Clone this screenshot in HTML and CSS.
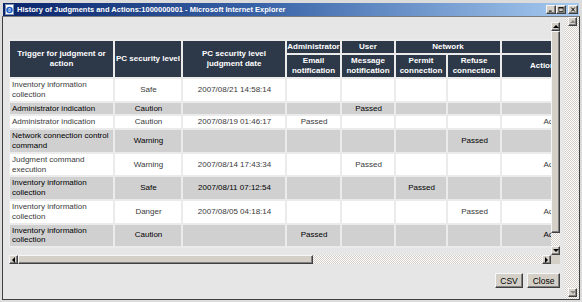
FILE: index.html
```html
<!DOCTYPE html>
<html lang="en">
<head>
    <meta charset="UTF-8">
    <title>History of Judgments and Actions</title>
    <link rel="stylesheet" href="styles.css">
</head>
<body>
<div class="window">
    <div class="titlebar">
        <svg class="app-icon" viewBox="0 0 11 11">
            <rect x="1.5" y="0.5" width="8" height="10" fill="#fff" stroke="#8090b0"/>
            <circle cx="5.5" cy="6" r="2.5" fill="none" stroke="#1a5cc8" stroke-width="1.5"/>
            <path d="M3 6h5" stroke="#1a5cc8" stroke-width="1.2"/>
        </svg>
        <span class="title">History of Judgments and Actions:1000000001 - Microsoft Internet Explorer</span>
        <div class="caption-buttons">
            <span class="cap-btn raised">
                <svg viewBox="0 0 8 7"><rect x="1" y="5" width="4" height="1.5" fill="#000"/></svg>
            </span>
            <span class="cap-btn raised">
                <svg viewBox="0 0 8 7"><rect x="1" y="0.5" width="6" height="6" fill="none" stroke="#000"/><rect x="1" y="0.5" width="6" height="1.5" fill="#000"/></svg>
            </span>
            <span class="cap-btn raised close">
                <svg viewBox="0 0 8 7"><path d="M1.5 0.8L6.5 6.2M6.5 0.8L1.5 6.2" stroke="#000" stroke-width="1.4"/></svg>
            </span>
        </div>
    </div>

    <div class="client">
        <div class="doc">
            <div class="scrollbox">
                <div class="viewport">
                    <table class="history">
                        <colgroup>
                            <col style="width:103px">
                            <col style="width:66px">
                            <col style="width:102px">
                            <col style="width:53px">
                            <col style="width:52px">
                            <col style="width:50px">
                            <col style="width:52px">
                            <col style="width:104px">
                        </colgroup>
                        <thead>
                            <tr>
                                <th rowspan="2">Trigger for judgment or action</th>
                                <th rowspan="2" class="nowrap">PC security level</th>
                                <th rowspan="2">PC security level judgment date</th>
                                <th>Administrator</th>
                                <th>User</th>
                                <th colspan="2">Network</th>
                                <th></th>
                            </tr>
                            <tr>
                                <th>Email notification</th>
                                <th>Message notification</th>
                                <th>Permit connection</th>
                                <th>Refuse connection</th>
                                <th>Action taken</th>
                            </tr>
                        </thead>
                        <tbody>
                            <tr>
                                <td class="trigger">Inventory information collection</td>
                                <td>Safe</td>
                                <td>2007/08/21 14:58:14</td>
                                <td></td><td></td><td></td><td></td><td></td>
                            </tr>
                            <tr class="alt">
                                <td class="trigger">Administrator indication</td>
                                <td>Caution</td>
                                <td></td>
                                <td></td><td>Passed</td><td></td><td></td><td></td>
                            </tr>
                            <tr>
                                <td class="trigger">Administrator indication</td>
                                <td>Caution</td>
                                <td>2007/08/19 01:46:17</td>
                                <td>Passed</td><td></td><td></td><td></td><td>Action</td>
                            </tr>
                            <tr class="alt">
                                <td class="trigger">Network connection control command</td>
                                <td>Warning</td>
                                <td></td>
                                <td></td><td></td><td></td><td>Passed</td><td></td>
                            </tr>
                            <tr>
                                <td class="trigger">Judgment command execution</td>
                                <td>Warning</td>
                                <td>2007/08/14 17:43:34</td>
                                <td></td><td>Passed</td><td></td><td></td><td>Action</td>
                            </tr>
                            <tr class="alt">
                                <td class="trigger">Inventory information collection</td>
                                <td>Safe</td>
                                <td>2007/08/11 07:12:54</td>
                                <td></td><td></td><td>Passed</td><td></td><td></td>
                            </tr>
                            <tr>
                                <td class="trigger">Inventory information collection</td>
                                <td>Danger</td>
                                <td>2007/08/05 04:18:14</td>
                                <td></td><td></td><td></td><td>Passed</td><td>Action</td>
                            </tr>
                            <tr class="alt">
                                <td class="trigger">Inventory information collection</td>
                                <td>Caution</td>
                                <td></td>
                                <td>Passed</td><td></td><td></td><td></td><td>Action</td>
                            </tr>
                        </tbody>
                    </table>
                </div>

                <div class="vbar">
                    <span class="arrow raised up"></span>
                    <span class="vthumb raised"></span>
                    <span class="track"></span>
                    <span class="arrow raised down"></span>
                </div>
                <div class="hbar">
                    <span class="arrow raised left"></span>
                    <span class="hthumb raised"></span>
                    <span class="track"></span>
                    <span class="arrow raised right"></span>
                </div>
                <div class="corner"></div>
            </div>

            <div class="actions">
                <button class="btn btn-csv">CSV</button>
                <button class="btn btn-close">Close</button>
            </div>
        </div>

        <div class="page-bar">
            <span class="arrow raised up disabled"></span>
            <span class="arrow raised down disabled"></span>
        </div>
    </div>
</div>
</body>
</html>
```

FILE: styles.css
```css
body {
    margin: 0;
    font-family: "Liberation Sans", Arial, sans-serif;
}

.window {
    width: 582px;
    height: 302px;
    box-sizing: border-box;
    padding: 3px 2px 2px 2px;
    background-color: #dcdcdc;
    display: flex;
    flex-direction: column;
}

/* title bar */
.titlebar {
    height: 13px;
    margin: 0 1px;
    padding: 0 1px;
    display: flex;
    align-items: center;
    background: linear-gradient(to right, #0a246a, #3a64a8 45%, #a6caf0);
}

.app-icon {
    width: 11px;
    height: 11px;
    margin-right: 2px;
    flex: none;
}

.title {
    flex: 1;
    color: #fff;
    font-weight: bold;
    font-size: 7.5px;
    white-space: nowrap;
    overflow: hidden;
}

.caption-buttons {
    display: flex;
}

.cap-btn {
    width: 10px;
    height: 9px;
    display: flex;
    align-items: center;
    justify-content: center;
}

.cap-btn svg {
    width: 6px;
    height: 5px;
}

.cap-btn.close {
    margin-left: 2px;
}

.raised {
    box-sizing: border-box;
    background-color: #d4d0c8;
    border: 1px solid;
    border-color: #f6f6f6 #404040 #404040 #f6f6f6;
    box-shadow: inset -1px -1px #808080;
}

/* client area */
.client {
    flex: 1;
    display: flex;
    border: 1px solid #404040;
    border-top-color: #7a7a7a;
    background-color: #e6e6e6;
}

.doc {
    flex: 1;
    padding: 5px 5px 0 6px;
    display: flex;
    flex-direction: column;
}

.scrollbox {
    display: grid;
    grid-template-columns: 542px 9px;
    grid-template-rows: 233px 9px;
}

.viewport {
    overflow: hidden;
}

.history {
    margin: 17px 0 0 -1px;
    width: 600px;
    table-layout: fixed;
    border-spacing: 2px;
    background-color: #ebebeb;
    font-size: 8px;
    line-height: 10px;
}

.history th {
    background-color: #2d3848;
    color: #fff;
    font-weight: bold;
    padding: 1px 0;
    text-align: center;
    vertical-align: middle;
}

.history th.nowrap {
    white-space: nowrap;
}

.history tbody {
    line-height: 9.8px;
}

.history td {
    background-color: #fff;
    color: #3a3a3a;
    padding: 1px 1px 1px 2px;
    text-align: center;
    vertical-align: middle;
}

.history td.trigger {
    text-align: left;
}

.history tr.alt td {
    background-color: #d0d0d0;
    color: #000;
}

/* scrollbars */
.vbar {
    display: flex;
    flex-direction: column;
}

.hbar {
    display: flex;
}

.arrow {
    width: 9px;
    height: 9px;
    flex: none;
    display: flex;
    align-items: center;
    justify-content: center;
}

.arrow::after {
    content: "";
    width: 0;
    height: 0;
}

.arrow.up::after {
    border-left: 3px solid transparent;
    border-right: 3px solid transparent;
    border-bottom: 3px solid #000;
}

.arrow.down::after {
    border-left: 3px solid transparent;
    border-right: 3px solid transparent;
    border-top: 3px solid #000;
}

.arrow.left::after {
    border-top: 3px solid transparent;
    border-bottom: 3px solid transparent;
    border-right: 3px solid #000;
}

.arrow.right::after {
    border-top: 3px solid transparent;
    border-bottom: 3px solid transparent;
    border-left: 3px solid #000;
}

.arrow.disabled.up::after {
    border-bottom-color: #8a8a8a;
}

.arrow.disabled.down::after {
    border-top-color: #8a8a8a;
}

.vthumb {
    height: 202px;
    flex: none;
}

.hthumb {
    width: 295px;
    flex: none;
}

.track {
    flex: 1;
    background: repeating-conic-gradient(#fff 0 25%, #d4d0c8 0 50%) 0 0 / 2px 2px;
}

.corner {
    background-color: #d4d0c8;
}

.page-bar {
    width: 14px;
    box-sizing: border-box;
    padding: 0 2px 2px 3px;
    display: flex;
    flex-direction: column;
    justify-content: space-between;
    background: repeating-conic-gradient(#fff 0 25%, #d4d0c8 0 50%) 0 0 / 2px 2px;
}

/* buttons */
.actions {
    display: flex;
    justify-content: flex-end;
    gap: 4px;
    margin-top: 9px;
}

.btn {
    height: 15px;
    padding: 0;
    font-family: "Liberation Sans", Arial, sans-serif;
    font-size: 8.5px;
    color: #000;
    background-color: #d4d0c8;
    border: 1px solid;
    border-color: #f6f6f6 #404040 #404040 #f6f6f6;
    box-shadow: inset -1px -1px #808080;
}

.btn-csv {
    width: 28px;
}

.btn-close {
    width: 33px;
}
```
